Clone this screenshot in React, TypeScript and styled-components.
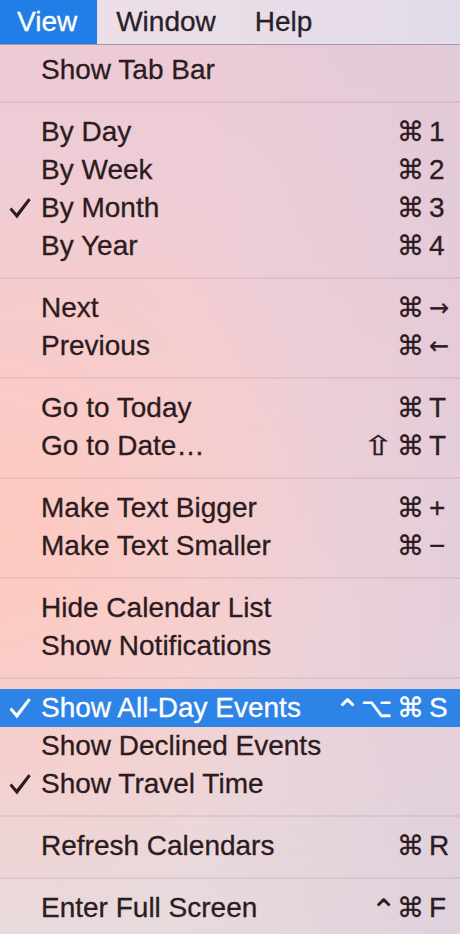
import styled, { createGlobalStyle } from 'styled-components';

type Item = {
  label: string;
  checked?: boolean;
  active?: boolean;
  mods?: string[];
  keyName?: string;
};

const groups: Item[][] = [
  [{ label: 'Show Tab Bar' }],
  [
    { label: 'By Day', mods: ['⌘'], keyName: '1' },
    { label: 'By Week', mods: ['⌘'], keyName: '2' },
    { label: 'By Month', checked: true, mods: ['⌘'], keyName: '3' },
    { label: 'By Year', mods: ['⌘'], keyName: '4' },
  ],
  [
    { label: 'Next', mods: ['⌘'], keyName: '→' },
    { label: 'Previous', mods: ['⌘'], keyName: '←' },
  ],
  [
    { label: 'Go to Today', mods: ['⌘'], keyName: 'T' },
    { label: 'Go to Date…', mods: ['⇧', '⌘'], keyName: 'T' },
  ],
  [
    { label: 'Make Text Bigger', mods: ['⌘'], keyName: '+' },
    { label: 'Make Text Smaller', mods: ['⌘'], keyName: '−' },
  ],
  [{ label: 'Hide Calendar List' }, { label: 'Show Notifications' }],
  [
    { label: 'Show All-Day Events', checked: true, active: true, mods: ['⌃', '⌥', '⌘'], keyName: 'S' },
    { label: 'Show Declined Events' },
    { label: 'Show Travel Time', checked: true },
  ],
  [{ label: 'Refresh Calendars', mods: ['⌘'], keyName: 'R' }],
  [{ label: 'Enter Full Screen', mods: ['⌃', '⌘'], keyName: 'F' }],
];

const arrows = ['→', '←'];

function Check({ light }: { light?: boolean }) {
  return (
    <CheckIcon width="22" height="21" viewBox="0 0 22 21">
      <path d="M0.5 11.5 L2.6 9.6 L7.6 15.2 L19.4 0.3 L21.8 2.1 L8 20.6 Z" fill={light ? '#fff' : '#2c1b20'} />
    </CheckIcon>
  );
}

export default function App() {
  return (
    <Screen>
      <GlobalStyle />
      <MenuBar>
        <BarTitle $open $first>View</BarTitle>
        <BarTitle>Window</BarTitle>
        <BarTitle>Help</BarTitle>
      </MenuBar>
      <Menu>
        {groups.map((group, gi) => (
          <Group key={gi}>
            {gi > 0 && <Separator />}
            {group.map((item) => (
              <Row key={item.label} $active={item.active}>
                <Gutter>{item.checked && <Check light={item.active} />}</Gutter>
                <Label>{item.label}</Label>
                {item.keyName && (
                  <Shortcut>
                    {item.mods?.map((m) => (
                      <Mod key={m} $kind={m === '⌃' ? 'caret' : m === '⇧' ? 'shift' : 'plain'}>
                        {m}
                      </Mod>
                    ))}
                    <KeyCap $arrow={arrows.includes(item.keyName)}>{item.keyName}</KeyCap>
                  </Shortcut>
                )}
              </Row>
            ))}
          </Group>
        ))}
      </Menu>
    </Screen>
  );
}

const GlobalStyle = createGlobalStyle`
  html, body {
    margin: 0;
    padding: 0;
  }
  body {
    font-family: "Liberation Sans", "DejaVu Sans", Arial, sans-serif;
    -webkit-font-smoothing: antialiased;
  }
`;

const Screen = styled.div`
  width: 460px;
  height: 934px;
  overflow: hidden;
  color: #2c1b20;
  background:
    radial-gradient(ellipse 75% 42% at 0% 58%, rgba(255, 200, 190, 0.95), rgba(255, 200, 190, 0) 100%),
    linear-gradient(to right, rgba(214, 200, 222, 0) 40%, rgba(214, 200, 222, 0.45) 100%),
    linear-gradient(to bottom, #ebcad6 0%, #f2cfd5 40%, #f0d4d8 70%, #e7dadd 100%);
`;

const MenuBar = styled.div`
  display: flex;
  height: 44px;
  border-bottom: 1px solid #a29aa8;
  background: linear-gradient(to right, #efdfe6 0%, #e9dde7 50%, #e2dbe8 100%);
`;

const BarTitle = styled.div<{ $open?: boolean; $first?: boolean }>`
  display: flex;
  align-items: center;
  padding: 0 19.5px 0 ${(p) => (p.$first ? '17px' : '19.5px')};
  font-size: 28px;
  -webkit-text-stroke: 0.3px currentColor;
  color: ${(p) => (p.$open ? '#fff' : '#2a1f28')};
  background: ${(p) => (p.$open ? '#237de6' : 'transparent')};
`;

const Menu = styled.div`
  padding-top: 6px;
`;

const Group = styled.div``;

const Separator = styled.div`
  height: 24px;
  display: flex;
  align-items: center;
  &::after {
    content: '';
    flex: 1;
    height: 2px;
    margin-top: 1px;
    background: rgba(120, 70, 85, 0.1);
  }
`;

const Row = styled.div<{ $active?: boolean }>`
  display: grid;
  grid-template-columns: 41px 1fr auto;
  align-items: center;
  height: 38px;
  line-height: 38px;
  padding-right: 5px;
  font-size: 28px;
  -webkit-text-stroke: 0.3px currentColor;
  color: ${(p) => (p.$active ? '#fff' : '#2c1b20')};
  background: ${(p) => (p.$active ? '#2e83e6' : 'transparent')};
`;

const Gutter = styled.div`
  display: flex;
  align-items: center;
  height: 38px;
  padding-left: 9px;
`;

const CheckIcon = styled.svg`
  display: block;
  margin-top: 1px;
`;

const Label = styled.span`
  white-space: nowrap;
`;

const Shortcut = styled.span`
  display: flex;
  align-items: center;
  height: 38px;
`;

const Mod = styled.span<{ $kind: 'caret' | 'shift' | 'plain' }>`
  display: inline-block;
  font-family: "DejaVu Sans", "Liberation Sans", sans-serif;
  line-height: 38px;
  font-size: ${(p) => (p.$kind === 'caret' ? '32px' : '27px')};
  -webkit-text-stroke: ${(p) => (p.$kind === 'caret' ? '0' : '0.3px currentColor')};
  margin-right: ${(p) => (p.$kind === 'caret' ? '0' : p.$kind === 'shift' ? '7px' : '5px')};
  margin-left: ${(p) => (p.$kind === 'shift' ? '4px' : '0')};
  transform: ${(p) =>
    p.$kind === 'caret' ? 'translateY(3px)' : p.$kind === 'shift' ? 'scaleX(1.4)' : 'none'};
`;

const KeyCap = styled.span<{ $arrow?: boolean }>`
  width: 26px;
  text-align: left;
  font-family: ${(p) => (p.$arrow ? '"DejaVu Sans", sans-serif' : 'inherit')};
  font-size: ${(p) => (p.$arrow ? '24px' : '28px')};
  letter-spacing: ${(p) => (p.$arrow ? '-1px' : '0')};
`;
